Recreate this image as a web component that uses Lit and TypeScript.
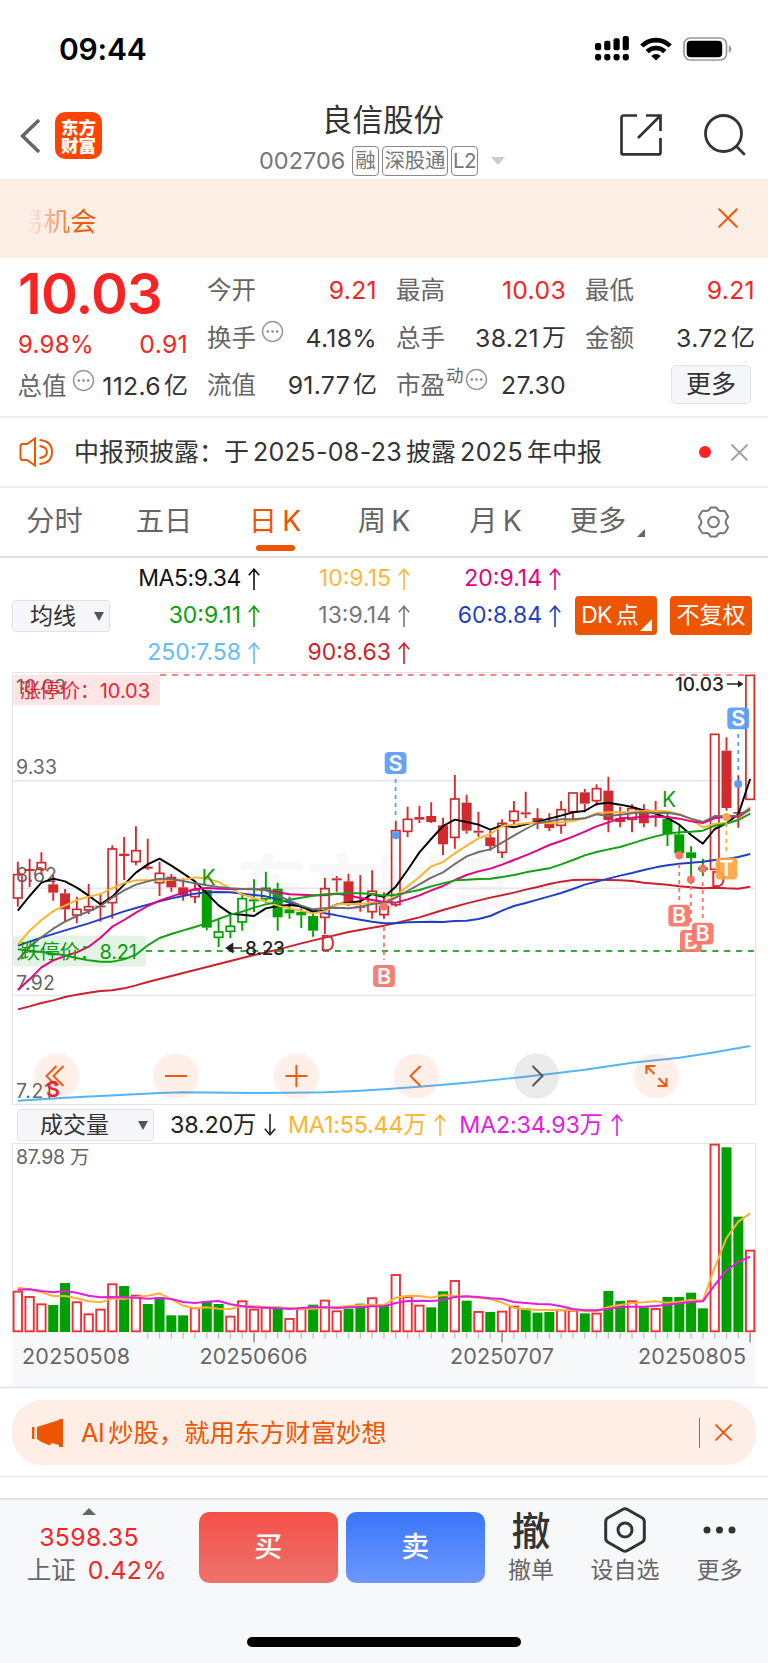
import { LitElement, html, svg, css } from "lit";
import { customElement } from "lit/decorators.js";

type Kind = "h" | "r" | "g" | "o";
type Candle = [Kind, number, number, number, number];

const X0 = 17.8;
const STEP = 11.812;
const xAt = (i: number) => X0 + STEP * i;
const priceY = (v: number) => 660 + v / 3;
const volY = (v: number) => 1100 + v / 3;

/* kind, body top, body bottom, high, low (h: hollow red, r: solid red, g: solid green, o: hollow green) */
const CANDLES: Candle[] = [
  ["h", 644, 714, 605, 740], ["r", 627, 633, 596, 681], ["h", 608, 628, 577, 645], ["r", 673, 698, 645, 722],
  ["r", 700, 748, 687, 785], ["h", 748, 765, 710, 790], ["h", 740, 750, 672, 762], ["r", 737, 742, 700, 785],
  ["h", 567, 728, 556, 776], ["r", 581, 588, 531, 660], ["h", 572, 605, 499, 616], ["r", 620, 626, 536, 630],
  ["h", 640, 668, 605, 708], ["r", 650, 682, 642, 695], ["r", 682, 706, 655, 722], ["h", 690, 710, 672, 730],
  ["g", 690, 803, 690, 811], ["o", 816, 832, 777, 861], ["o", 799, 814, 757, 835], ["o", 716, 786, 698, 812],
  ["g", 718, 724, 658, 756], ["o", 685, 716, 635, 730], ["g", 686, 772, 668, 812], ["g", 748, 760, 710, 776],
  ["g", 756, 766, 745, 804], ["g", 768, 812, 755, 830], ["h", 686, 772, 653, 822], ["r", 655, 661, 648, 695],
  ["r", 664, 730, 641, 738], ["r", 738, 743, 645, 755], ["h", 694, 755, 631, 776], ["h", 740, 764, 697, 776],
  ["h", 512, 734, 482, 740], ["h", 478, 514, 440, 531], ["r", 471, 479, 437, 489], ["r", 468, 486, 427, 489],
  ["r", 496, 553, 473, 585], ["h", 417, 532, 345, 566], ["r", 428, 512, 404, 521], ["r", 512, 518, 455, 530],
  ["r", 532, 558, 512, 572], ["h", 490, 577, 478, 594], ["h", 454, 482, 423, 495], ["r", 457, 463, 395, 474],
  ["r", 474, 488, 445, 508], ["r", 490, 504, 460, 513], ["h", 449, 496, 423, 521], ["h", 399, 455, 399, 478],
  ["r", 397, 431, 387, 457], ["h", 386, 422, 373, 437], ["r", 392, 480, 350, 517], ["r", 474, 486, 440, 502],
  ["h", 446, 478, 433, 517], ["r", 448, 490, 433, 502], ["r", 466, 472, 423, 500], ["g", 476, 523, 460, 558],
  ["g", 523, 580, 498, 598], ["g", 577, 594, 559, 672], ["g", 622, 630, 596, 648], ["h", 223, 628, 223, 628],
  ["r", 272, 444, 232, 452], ["r", 456, 461, 346, 503], ["h", 46, 418, 46, 418],
];

const MA_LINES: { color: string; pts: string }[] = [
  { color: "#54b4f7", pts: "0:1322 4:1313 7:1308 12:1299 14:1297 20:1299 23:1298.5 26:1297 29:1292 31:1288 34:1280 38:1268 42:1254 45:1242 48:1229 52:1208 56:1193 59:1177 62:1158" },
  { color: "#cc1f2d", pts: "0:1048 1:1039 2:1029 3:1021 4:1011 5:1004 6:998 7:993 8:991 9:985 10:976 11:966 12:957 14:939 16:921 18:903 20:885 22:869 24:850 26:833 28:816 30:803 31:797 32:789 34:772 36:750 38:730 40:713 42:698 43:689 44:681 45:672 46:665 47:660 48:659 49:659 50:660 51:661 52:663 53:668 54:671 55:674 56:679 57:682 58:685 59:683 60:685 61:686 62:680" },
  { color: "#1f3fc4", pts: "0:857 2:833 4:811 6:790 7:778 8:766 9:754 10:744 11:734 12:724 13:715 14:708 15:701 16:697 17:696 18:697 19:701 20:705 21:709 22:718 23:728 24:741 25:750 26:760 27:766 28:773 29:779 30:785 31:790 32:790 33:787 34:786 35:785 36:786 37:783 38:782 39:777 40:768 41:752 42:738 43:729 44:719 45:709 46:699 47:687 48:674 49:665 50:656 51:647 52:639 53:630 54:622 55:616 56:611 57:608 58:605 59:600 60:597 61:591 62:582" },
  { color: "#000000", pts: "0:752 1:708 2:668 3:656 4:664 5:683 6:707 7:733 8:710 9:674 10:638 11:613 12:596 13:617 14:640 15:664 16:700 17:736 18:761 19:764 20:768 21:745 22:738 23:735 24:739 25:756 26:752 27:733 28:728 29:724 30:702 31:711 32:680 33:630 34:577 35:537 36:498 37:479 38:486 39:494 40:509 41:496 42:502 43:493 44:485 45:476 46:467 47:457 48:453 49:432 50:428 51:434 52:441 53:451 54:461 55:474 56:494 57:525 58:551 59:507 60:490 61:463 62:357" },
  { color: "#ffb32e", pts: "0:854 1:812 2:780 3:753 4:737 5:720 6:710 7:702 8:684 9:669 10:661 11:661 12:660 13:660 14:659 15:652 16:656 17:666 18:686 19:703 20:714 21:725 22:737 23:745 24:752 25:760 26:754 27:733 28:731 29:732 30:728 31:726 32:707 33:679 34:651 35:619 36:606 37:580 38:557 39:535 40:522 41:498 42:494 43:490 44:488 45:490 46:487 47:483 48:474 49:460 50:457 51:457 52:456 53:453 54:452 55:454 56:462 57:478 58:502 59:491 60:490 61:479 62:441" },
  { color: "#e5007f", pts: "0:990 1:958 2:922 3:901 4:888 5:877 6:860 7:833 8:800 9:780 10:758 11:738 12:722 13:710 14:698 15:687 16:684 17:686 18:687 19:687 20:688 21:690 22:697 23:703 24:704 25:706 26:706 27:701 28:706 29:714 30:720 31:726 32:728 33:718 34:706 35:691 36:678 37:660 38:645 39:634 40:626 41:614 42:600 43:586 44:571 45:555 46:543 47:530 48:515 49:499 50:487 51:475 52:473 53:470 54:470 55:471 56:476 57:484 58:489 59:474 60:470 61:470 62:448" },
  { color: "#11a011", pts: "0:868 2:876 4:886 5:894 6:901 7:905 8:905 9:898 10:884 11:856 12:834 13:822 14:811 15:801 16:790 17:777 18:764 19:755 20:743 21:733 22:726 23:719 24:713 25:707 26:703 27:701 28:700 29:700 30:702 31:707 32:704 33:697 34:690 35:679 36:670 37:661 38:659 39:657 40:656 41:651 42:645 43:637 45:625 46:613 47:600 48:586 49:576 50:568 51:561 52:550 53:539 54:529 55:521 56:517 57:515 58:512 59:497 60:491 61:480 62:461" },
  { color: "#6e6e6e", pts: "0:900 1:860 2:832 3:806 4:785 5:768 6:754 7:738 8:713 9:691 10:674 11:664 12:656 13:658 14:663 15:670 16:676 17:681 18:685 19:687 20:686 21:691 22:706 23:722 24:737 25:748 26:745 27:743 28:745 29:741 30:732 31:729 32:713 33:693 34:673 35:653 36:637 37:612 38:589 39:576 40:568 41:548 42:527 43:507 44:489 45:484 46:478 47:478 48:475 49:463 50:468 51:464 52:460 53:457 54:459 55:458 56:464 57:476 58:486 59:468 60:469 61:467 62:446" },
];

const VOLUMES =
  "r574 r590 r612 g615 g549 r606 r642 r628 r552 g558 r586 g612 g592 g646 g646 r624 g606 g612 r649 r603 r628 r622 g620 r656 r627 g614 r601 r633 g626 g611 r594 g617 r524 r590 r616 g622 g574 r542 g602 r635 g636 r634 r619 g625 g638 g636 r630 r631 g640 r640 g573 g603 r603 g622 r626 g591 g591 g578 g625 r133 g142 g350 r451".split(" ");

const VOL_LINES = [
  { color: "#ffb32e", ys: [563, 568, 577, 588, 588, 595, 604, 607, 595, 597, 591, 587, 580, 598, 617, 625, 622, 626, 627, 618, 619, 621, 623, 624, 628, 626, 623, 621, 618, 616, 614, 615, 593, 587, 588, 593, 585, 588, 590, 593, 597, 608, 623, 628, 630, 630, 630, 629, 633, 634, 621, 615, 609, 607, 604, 608, 606, 600, 602, 502, 414, 365, 340] },
  { color: "#e31ce3", ys: [569, 568, 573, 577, 573, 578, 587, 592, 591, 592, 593, 596, 594, 597, 606, 609, 605, 603, 613, 619, 622, 623, 625, 627, 624, 622, 622, 624, 622, 622, 619, 619, 609, 603, 602, 603, 600, 591, 589, 591, 595, 597, 606, 609, 612, 613, 619, 627, 631, 631, 626, 622, 620, 620, 618, 614, 610, 606, 604, 555, 511, 486, 470] },
];

const RED = "#d02b2f";
const GREEN = "#00a000";

const cross = (size: number, color: string, width = 2) => html`<svg width=${size} height=${size} viewBox="0 0 20 20"
  fill="none" stroke=${color} stroke-width=${(width * 20) / size} stroke-linecap="round"><path d="M1.2 1.2 18.8 18.8M18.8 1.2 1.2 18.8"/></svg>`;

const info = html`<svg class="info" width="23" height="23" viewBox="0 0 23 23"><circle cx="11.5" cy="11.5" r="10" fill="none"
  stroke="#999" stroke-width="1.5"/><g fill="#888"><circle cx="6.8" cy="11.5" r="1.3"/><circle cx="11.5" cy="11.5" r="1.3"/><circle cx="16.2" cy="11.5" r="1.3"/></g></svg>`;

const arrow = (dir: "up" | "down" = "up") => html`<svg width="12" height="22" viewBox="0 0 12 22" fill="none" stroke="currentColor"
  stroke-width="1.6"><path d=${dir === "up" ? "M6 22V1.5M.8 7.2 6 1.2l5.2 6" : "M6 0v20.5M.8 14.8 6 20.8l5.2-6"}/></svg>`;

const caret = html`<svg width="10" height="9" viewBox="0 0 10 9"><path d="M0 0h10L5 9z" fill="#555"/></svg>`;

@customElement("kline-chart")
export class KlineChart extends LitElement {
  static styles = css`
    :host { display: block; }
    svg { display: block; }
    text { font-family: Inter, "Noto Sans CJK SC", sans-serif; }
  `;

  private candle([kind, top, bottom, high, low]: Candle, i: number) {
    const x = xAt(i);
    const color = kind === "g" || kind === "o" ? GREEN : RED;
    const hollow = kind === "h" || kind === "o";
    const [t, b, h, l] = [top, bottom, high, low].map(priceY);
    return svg`<path d="M${x} ${h}V${t}M${x} ${b}V${l}" stroke=${color} stroke-width="1.9"/>
      ${hollow
        ? svg`<rect x=${x - 4.2} y=${t} width="8.4" height=${b - t} fill="none" stroke=${color} stroke-width="1.7"/>`
        : svg`<rect x=${x - 5} y=${t} width="10" height=${b - t} fill=${color}/>`}`;
  }

  private line({ color, pts }: { color: string; pts: string }) {
    const points = pts.split(" ").map((p) => {
      const [i, v] = p.split(":").map(Number);
      return `${xAt(i)},${priceY(v)}`;
    });
    return svg`<polyline points=${points.join(" ")} fill="none" stroke=${color} stroke-width="1.95" stroke-linejoin="round"/>`;
  }

  private marker(letter: string, color: string, x: number, y: number, dotY: number, from: number, to: number) {
    return svg`<path d="M${x} ${from}V${to}" stroke=${color} stroke-width="1.8" stroke-dasharray="4 4"/>
      <circle cx=${x} cy=${dotY} r="4" fill=${color}/>
      <rect x=${x - 10.9} y=${y - 10.9} width="21.8" height="21.8" rx="4" fill=${color} fill-opacity=".92"/>
      <text x=${x} y=${y + 7.8} text-anchor="middle" font-size="21.5" font-weight="600" fill="#fff">${letter}</text>`;
  }

  private tool(x: number, path: string, muted = false) {
    return svg`<circle cx=${x} cy="1076" r="22.6" fill=${muted ? "#888" : "#f47a30"} fill-opacity=${muted ? ".18" : ".11"}/>
      <path transform="translate(${x} 1076)" d=${path} fill="none" stroke=${muted ? "#555" : "#f05a0a"} stroke-width="2"/>`;
  }

  render() {
    const blue = "#5a9cf8";
    const coral = "#fb7365";
    return html`<svg width="768" height="440" viewBox="0 668 768 440">
      <g font-size="71" font-weight="700" fill="#f8f8f9"><text x="236" y="913" textLength="282">东方财富</text></g>
      <path d="M12.5 672.5H755.5V1104.5H12.5Z" fill="none" stroke="#e3e4e8"/>
      <path d="M13 780.7H755M13 888.3H755M13 995.4H755" stroke="#e4e7ee" stroke-width="1.4"/>
      <rect x="13" y="674.5" width="147" height="31" rx="3" fill="#fee6e7"/>
      <rect x="13" y="935.5" width="133" height="31" rx="3" fill="#e4f4e4"/>
      <g font-size="19.5" fill="#666">
        <text x="16" y="694" textLength="50">10.03</text><text x="16" y="774" textLength="41">9.33</text>
        <text x="16" y="882" textLength="41">8.62</text><text x="16" y="990" textLength="39">7.92</text>
        <text x="16" y="1098" textLength="36">7.21</text>
      </g>
      <path d="M160 675H750" stroke="#ff8080" stroke-width="1.8" stroke-dasharray="6 5.8"/>
      <path d="M146 951H756" stroke="#2fae2f" stroke-width="2" stroke-dasharray="6 5.8"/>
      ${CANDLES.map((c, i) => this.candle(c, i))}
      ${MA_LINES.map((l) => this.line(l))}
      <text x="20" y="698" font-size="20" fill="#f5222d" textLength="130">涨停价：10.03</text>
      <text x="20" y="959" font-size="20" fill="#0a9a0a" textLength="117">跌停价：8.21</text>
      <g font-size="19" fill="#222" font-weight="500">
        <text x="245" y="955" textLength="40">8.23</text><text x="675" y="691" textLength="49">10.03</text>
      </g>
      <path d="M242 948H228M232.5 944 226.5 948l6 4zM727 684h14" stroke="#222" stroke-width="1.6" fill="#222"/>
      <path d="M738 680.5 743.5 684l-5.5 3.5z" fill="#222"/>
      <g font-size="21"><text x="201.5" y="885" fill="#0a9a0a">K</text><text x="662" y="806.5" fill="#0a9a0a">K</text>
        <text x="320" y="950.5" fill=${RED}>D</text><text x="710.5" y="887" fill=${RED}>D</text></g>
      ${this.marker("S", blue, 395.6, 763, 835.3, 779, 816)}
      ${this.marker("B", coral, 384, 976, 906.5, 927, 960)}
      ${this.marker("S", blue, 738.2, 718.4, 784, 734, 770)}
      ${this.marker("T", "#ffa63d", 726.4, 868.5, 817, 823, 854)}
      ${this.marker("B", coral, 679.2, 915.6, 855.3, 864, 900)}
      ${this.marker("B", coral, 690.9, 941, 879.5, 886, 926)}
      ${this.marker("B", coral, 702.7, 933.6, 868.8, 882, 919)}
      ${this.tool(56.5, "M0-10-10 0 0 10M7-10-3 0 7 10")}
      ${this.tool(176, "M-11 0H11")}
      ${this.tool(296.4, "M-11 0H11M0-11V11")}
      ${this.tool(416.5, "M4-10-6 0 4 10")}
      ${this.tool(536.5, "M-4-10 6 0-4 10", true)}
      ${this.tool(656.4, "M-10-2V-10H-1M-10-10-2-2M10 2V10H1M10 10 2 2")}
      <text x="46" y="1096.5" font-size="21.5" font-weight="600" fill="#f5222d">S</text>
    </svg>`;
  }
}

@customElement("volume-chart")
export class VolumeChart extends LitElement {
  static styles = css`
    :host { display: block; }
    svg { display: block; }
    text { font-family: Inter, "Noto Sans CJK SC", sans-serif; }
  `;

  render() {
    const base = volY(696);
    const ticks = Array.from({ length: 52 }, (_, k) => k + 11);
    return html`<svg width="768" height="247" viewBox="0 1142 768 247">
      <rect x="12" y="1332" width="744" height="55" fill="#f7f8fa"/>
      <path d="M12.5 1332V1143.5H755.5V1332" fill="none" stroke="#e3e4e8"/>
      <path d="M0 1387.5H768" stroke="#e1e3e8" stroke-width="1.4"/>
      <text x="16" y="1163.5" font-size="19.5" fill="#666" textLength="73.5">87.98 万</text>
      ${VOLUMES.map((v, i) => {
        const x = xAt(i);
        const top = volY(Number(v.slice(1)));
        return v[0] === "g"
          ? svg`<rect x=${x - 5} y=${top} width="10" height=${base - top} fill=${GREEN}/>`
          : svg`<rect x=${x - 4.2} y=${top + 0.3} width="8.4" height=${base - top - 1} fill="#fff" stroke="#f03035" stroke-width="1.9"/>`;
      })}
      ${VOL_LINES.map(({ color, ys }) => svg`<polyline points=${ys.map((v, i) => `${xAt(i)},${volY(v)}`).join(" ")}
        fill="none" stroke=${color} stroke-width="2" stroke-linejoin="round"/>`)}
      ${ticks.map((i) => (i === 20 || i === 41 || i === 62)
        ? svg`<path d="M${xAt(i)} 1332.5V1342.5" stroke="#999" stroke-width="1.7"/>`
        : svg`<path d="M${xAt(i)} 1332.5V1338.5" stroke="#bbb" stroke-width="1.2"/>`)}
      <g font-size="21.5" fill="#666">
        <text x="22" y="1364" textLength="108">20250508</text><text x="199.5" y="1364" textLength="108">20250606</text>
        <text x="450" y="1364" textLength="104">20250707</text><text x="638" y="1364" textLength="108">20250805</text>
      </g>
    </svg>`;
  }
}

@customElement("app-root")
export class AppRoot extends LitElement {
  static styles = css`
    :host {
      display: block; width: 768px; height: 1663px; overflow: hidden; background: #fff; color: #333;
      font-family: Inter, "Noto Sans CJK SC", sans-serif; font-size: 24px; line-height: 1; box-sizing: border-box;
    }
    * { box-sizing: border-box; }
    svg { display: block; flex: none; }
    .status { height: 92px; display: flex; align-items: center; padding: 5px 36px 0 59px; color: #000; }
    .clock { font-size: 30px; font-weight: 600; letter-spacing: -0.2px; flex: 1; }
    .status-icons { display: flex; gap: 11px; align-items: center; }
    .nav { height: 87px; display: grid; grid-template-columns: 240px 1fr 240px; }
    .nav-left { display: flex; gap: 15px; padding: 20px 0 0 20px; align-items: flex-start; }
    .back { margin-top: 7px; }
    .logo { width: 47px; height: 47px; border-radius: 10px; background: #ff4400; color: #fff; display: grid; place-content: center;
      text-align: center; font: 900 17.5px/18px "Noto Sans CJK SC", sans-serif; }
    .nav-mid { display: flex; flex-direction: column; align-items: center; }
    .name { font-size: 30.6px; line-height: 32px; margin: 12px 0 0 -2px; }
    .codes { display: flex; align-items: center; color: #777; margin: 10px 0 0 -4px; gap: 3px; white-space: nowrap; height: 30px; }
    .code { letter-spacing: 0; margin-right: 4px; font-size: 23.5px; }
    .tag { border: 1.5px solid #888; border-radius: 4px; height: 30px; padding: 0 2px; line-height: 27px; font-size: 20.5px; letter-spacing: -0.3px; }
    .tag.lv { padding: 0 1px; letter-spacing: -0.6px; }
    .codes svg { margin-left: 10px; }
    .nav-right { display: flex; justify-content: flex-end; gap: 42px; padding: 22px 22px 0 0; }
    .promo { border-top: 2px solid #ececee; height: 79px; background: #fdeee6; display: flex; align-items: center; justify-content: space-between; padding: 0 30px 2px 17px; }
    .promo-text { font-size: 26.5px; color: #f05a0a; height: 40px; line-height: 40px; padding-top: 2px;
      -webkit-mask-image: linear-gradient(90deg, transparent 12px, #000 62px); mask-image: linear-gradient(90deg, transparent 12px, #000 62px); }
    .promo svg { margin-bottom: 2px; }
    .quote { height: 160px; border-bottom: 2px solid #eceef0; display: grid; grid-template-columns: 170px repeat(3, 169.5px); column-gap: 19.5px; padding: 0 12px 0 18px; }
    .col { display: flex; flex-direction: column; padding-top: 9px; }
    .col.main { padding-top: 0; }
    .cell { height: 47.3px; display: flex; align-items: center; white-space: nowrap; letter-spacing: 0.3px; }
    .main .cell { height: 45px; }
    .main .cell + .cell { height: 38px; }
    .k { color: #666; font-size: 24.5px; letter-spacing: 0; margin-left: -0.5px; }
    .v { margin-left: auto; font-size: 24.8px; display: flex; gap: 3px; }
    .v .unit { font-size: 24px; letter-spacing: 0; }
    .red, .cell .red { color: #f82424; }
    .price { font-size: 56px; font-weight: 600; color: #f82424; letter-spacing: -0.8px; height: 64px; line-height: 72px; }
    .info { margin: -12px 0 0 5px; }
    .main .info { margin-right: -3px; }
    .sup { font-size: 17.5px; color: #666; margin: -18px -4px 0 1px; }
    .more { width: 80px; height: 39px; border: 1.5px solid #e0e2e8; border-radius: 5px; background: #f6f7fa; margin: -1px 4px 0 auto;
      display: grid; place-content: center; font-size: 25px; letter-spacing: 0; }
    .notice { height: 70px; border-bottom: 2px solid #eceef0; display: flex; align-items: center; padding: 0 20px 0 19px; }
    .notice-text { margin-left: 20px; flex: 1; font-size: 25px; white-space: nowrap; }
    .num { margin: 0 4px; letter-spacing: 0.35px; }
    .dot { width: 12px; height: 12px; border-radius: 50%; background: #f82424; margin-right: 20px; }
    .tabs { height: 70px; border-bottom: 2px solid #dfe2e7; display: grid; grid-template-columns: 109px 110px 112px 106px 117px 88px 1fr; font-size: 28.3px; color: #666; }
    .tab { display: flex; justify-content: center; align-items: center; gap: 5px; position: relative; padding-bottom: 1px; }
    .tab:last-child { padding-left: 16px; }
    .tab.on { color: #ee5500; }
    .tab.on::after { content: ""; position: absolute; bottom: 5px; width: 39px; height: 6px; border-radius: 3px; background: #ee5500; }
    .tri { position: absolute; right: -3px; bottom: 19px; }
    .ma { height: 110px; display: grid; grid-template-columns: 110px 465px 1fr; padding: 2px 0 0; }
    .side { display: flex; align-items: center; padding: 1px 0 0 12px; }
    .select { height: 32px; border: 1.5px solid #e0e2e8; border-radius: 4px; background: #f6f7fa; display: flex; align-items: center; justify-content: space-between; }
    .select.avg { width: 98px; padding: 0 5px 0 17px; font-size: 23px; }
    .select.vol { width: 137px; padding: 0 5px 0 22px; font-size: 23px; letter-spacing: 0; }
    .values { display: grid; grid-template-columns: 149.5px 150px 151px; grid-template-rows: repeat(3, 37px); font-size: 23px; letter-spacing: 0; }
    .value { display: flex; align-items: center; justify-content: flex-end; gap: 6.5px; }
    .value:first-child { letter-spacing: -0.4px; }
    .chips { display: flex; gap: 13px; align-items: center; padding: 0 0 1px; }
    .chip { position: relative; width: 82px; height: 39px; background: #ee5500; color: #fff; border-radius: 4px; display: flex; align-items: center; justify-content: center; gap: 4px; font-size: 23px; }
    .chip.dk { padding-right: 13px; letter-spacing: -0.8px; }
    .chip svg { position: absolute; right: 5px; bottom: 4px; }
    .vol-head { height: 34px; display: flex; align-items: center; padding-left: 17px; white-space: nowrap; letter-spacing: -0.2px; font-size: 23.3px; }
    .stat { display: flex; align-items: center; gap: 8px; }
    .s1 { margin-left: 16px; color: #222; }
    .s2 { margin-left: 12px; color: #ffb32e; }
    .s3 { margin-left: 13px; color: #e31ce3; }
    .ai { height: 65px; margin: 11px 12px 11px; border-radius: 30px; background: #feeee6; color: #ee5500; display: flex; align-items: center; padding: 0 24px 0 20px; }
    .ai-text { margin-left: 18px; flex: 1; font-size: 25.3px; white-space: nowrap; }
    .ai-text .latin { margin-right: 4px; letter-spacing: -0.5px; }
    .ai-rule { width: 1.5px; height: 30px; background: #ee5500; margin-right: 15px; }
    .strip { height: 22px; border-top: 1.5px solid #e4e5ea; }
    .bottom { height: 166px; border-top: 2px solid #e0e2e6; background: #f7f8fa; display: flex; flex-direction: column; align-items: center; justify-content: space-between; padding-bottom: 17px; }
    .actions { width: 100%; display: flex; padding-top: 8px; height: 100px; }
    .index { width: 199px; padding-right: 21px; display: flex; flex-direction: column; align-items: center; font-size: 24.8px; letter-spacing: 0.3px; }
    .index-val { margin-top: 10px; }
    .index-row { display: flex; gap: 12px; margin: 8px 0 0 16px; align-items: center; }
    .trade { width: 138.5px; height: 71px; margin: 3.5px 8.5px 0 0; border-radius: 10px; display: grid; place-content: center; color: #fff; font-weight: 500; font-size: 28px; }
    .buy { background: linear-gradient(#f5504a, #ec726c); }
    .sell { background: linear-gradient(#3a76fa, #6c98fd); }
    .act { display: flex; flex-direction: column; align-items: center; color: #666; font-size: 23px; }
    .act.a { width: 76px; } .act.b { width: 112px; } .act.c { width: 77px; }
    .glyph { height: 44px; display: grid; place-content: center; color: #333; font-size: 39px; font-weight: 500; margin-bottom: 7px; }
    .home { width: 274px; height: 10px; border-radius: 5px; background: #000; }
  `;

  private ma(text: string, color: string) {
    return html`<span class="value" style="color:${color}">${text}${arrow()}</span>`;
  }

  private cell(key: string, value: string, unit = "", red = false, extra: unknown = "") {
    return html`<div class="cell"><span class="k">${key}</span>${extra}<span class="v ${red ? "red" : ""}"><span>${value}</span>${
      unit ? html`<span class="unit">${unit}</span>` : ""}</span></div>`;
  }

  render() {
    return html`
      <header class="status">
        <span class="clock">09:44</span>
        <div class="status-icons">
          <svg width="34" height="25" viewBox="0 0 34 25">
            <rect x="0" y="7" width="6.2" height="7.2" rx="2"/><rect x="9.2" y="4.7" width="6.2" height="9.500" rx="2"/>
            <rect x="18.5" y="2.300" width="6.2" height="11.900" rx="2"/><rect x="27.700" y="0" width="6.200" height="14.200" rx="2"/>
            <rect x="0" y="18" width="6.2" height="6.400" rx="2.400"/><rect x="9.2" y="18" width="6.2" height="6.400" rx="2.400"/>
            <rect x="18.5" y="18" width="6.2" height="6.400" rx="2.400"/><rect x="27.700" y="18" width="6.2" height="6.400" rx="2.400"/>
          </svg>
          <svg width="32" height="24" viewBox="0 0 32 24" fill="none" stroke="#000" stroke-width="4.6">
            <path d="M1.8 9a20 20 0 0 1 28.400 0M7.200 14.600a12.400 12.400 0 0 1 17.600 0"/><path d="M16 23.600 11.300 18.900a6.800 6.800 0 0 1 9.400 0z" fill="#000" stroke="none"/>
          </svg>
          <svg width="49" height="24" viewBox="0 0 49 24"><rect x="1" y="1" width="42.5" height="22" rx="6.5" fill="none" stroke="#999" stroke-width="1.7"/>
            <rect x="3.7" y="3.8" width="35.500" height="16.4" rx="4" fill="#000"/><path d="M45.8 8.2c3.400 1.200 3.400 6.400 0 7.600z" fill="#999"/></svg>
        </div>
      </header>
      <nav class="nav">
        <div class="nav-left">
          <svg class="back" width="20" height="34" viewBox="0 0 20 34" fill="none" stroke="#666" stroke-width="3.4"><path d="M19 1 2.500 17 19 33"/></svg>
          <div class="logo"><span>东方</span><span>财富</span></div>
        </div>
        <div class="nav-mid">
          <div class="name">良信股份</div>
          <div class="codes"><span class="code">002706</span><span class="tag">融</span><span class="tag">深股通</span><span class="tag lv">L2</span>
            <svg width="14" height="8" viewBox="0 0 14 8"><path d="M0 0h14L7 8z" fill="#ccc"/></svg></div>
        </div>
        <div class="nav-right">
          <svg width="42" height="42" viewBox="0 0 42 42" fill="none" stroke="#333" stroke-width="2.7">
            <path d="M17 1.500H3.500a2 2 0 0 0-2 2V38.400a2 2 0 0 0 2 2h35a2 2 0 0 0 2-2V24M26 1.500H40.500V17M40 2 18 24"/></svg>
          <svg width="42" height="42" viewBox="0 0 42 42" fill="none" stroke="#333" stroke-width="2.8" stroke-linecap="round"><circle cx="19.5" cy="19.5" r="18"/><path d="M32.500 32.500 40 40"/></svg>
        </div>
      </nav>
      <section class="promo"><div class="promo-text">易机会</div>${cross(20, "#f05a0a")}</section>
      <section class="quote">
        <div class="col main">
          <div class="price">10.03</div>
          <div class="cell red"><span>9.98%</span><span class="v">0.91</span></div>
          ${this.cell("总值", "112.6", "亿", false, info)}
        </div>
        <div class="col">
          ${this.cell("今开", "9.21", "", true)}${this.cell("换手", "4.18%", "", false, info)}
          ${this.cell("流值", "91.77", "亿")}
        </div>
        <div class="col">
          ${this.cell("最高", "10.03", "", true)}${this.cell("总手", "38.21", "万")}
          ${this.cell("市盈", "27.30", "", false, html`<span class="sup">动</span>${info}`)}
        </div>
        <div class="col">
          ${this.cell("最低", "9.21", "", true)}${this.cell("金额", "3.72", "亿")}
          <div class="cell"><span class="more">更多</span></div>
        </div>
      </section>
      <section class="notice">
        <svg width="35" height="30" viewBox="0 0 35 30" fill="none" stroke="#ee5500" stroke-width="2"><path d="M3.500 7H8L16 1.500V28.500L8 23H3.500Q1.500 23 1.500 21V9Q1.500 7 3.500 7ZM20.500 9q7.500 1 7.500 6t-7.500 6M20.500 3q12.500 1 12.500 12t-12.500 12"/></svg>
        <div class="notice-text">中报预披露：于<span class="num">2025-08-23</span>披露<span class="num">2025</span>年中报</div>
        <span class="dot"></span>${cross(17, "#999", 1.8)}
      </section>
      <nav class="tabs">
        <span class="tab">分时</span><span class="tab">五日</span><span class="tab on"><span>日</span><span>K</span></span>
        <span class="tab"><span>周</span><span>K</span></span><span class="tab"><span>月</span><span>K</span></span>
        <span class="tab">更多<svg class="tri" width="8" height="8" viewBox="0 0 8 8"><path d="M8 0V8H0z" fill="#666"/></svg></span>
        <span class="tab"><svg width="33" height="32" viewBox="0 0 33 32" fill="none" stroke="#777" stroke-width="2" stroke-linejoin="round">
          <path d="M13.500 1.500h6q1.200 3.800 5 3.500 3-.6 3.800.7l2.500 4.300q.6 1.300-1 2.800-2.300 3.200 0 6.400 1.600 1.500 1 2.800l-2.500 4.300q-.8 1.300-3.800.7-3.800-.3-5 3.500h-6q-1.200-3.800-5-3.500-3 .6-3.800-.7L2.200 22q-.6-1.300 1-2.800 2.300-3.200 0-6.400-1.600-1.500-1-2.800l2.500-4.300q.8-1.300 3.800-.7 3.800.3 5-3.500Z"/><circle cx="16.5" cy="16" r="5.3"/></svg></span>
      </nav>
      <section class="ma">
        <div class="side"><span class="select avg">均线${caret}</span></div>
        <div class="values">
          ${this.ma("MA5:9.34", "#111")}${this.ma("10:9.15", "#ffb83a")}${this.ma("20:9.14", "#e5007f")}
          ${this.ma("30:9.11", "#0ba00b")}${this.ma("13:9.14", "#777")}${this.ma("60:8.84", "#1f3fc4")}
          ${this.ma("250:7.58", "#62bcfb")}${this.ma("90:8.63", "#cc1f2d")}
        </div>
        <div class="chips">
          <span class="chip dk"><span>DK</span><span>点</span><svg width="12" height="12" viewBox="0 0 12 12"><path d="M12 0V12H0z" fill="#fff"/></svg></span>
          <span class="chip">不复权</span>
        </div>
      </section>
      <kline-chart></kline-chart>
      <section class="vol-head">
        <span class="select vol">成交量${caret}</span>
        <span class="stat s1">38.20万${arrow("down")}</span>
        <span class="stat s2">MA1:55.44万${arrow()}</span>
        <span class="stat s3">MA2:34.93万${arrow()}</span>
      </section>
      <volume-chart></volume-chart>
      <section class="ai">
        <svg width="31" height="28" viewBox="0 0 31 28" fill="#ee5500"><path d="M0 8h2.500v12H0zM5 8 27 1V0h4v28h-4v-2l-7-2q-2 3-4.500 1.500L9.500 23 5 20z"/></svg>
        <div class="ai-text"><span class="latin">AI</span>炒股，就用东方财富妙想</div>
        <span class="ai-rule"></span>${cross(17, "#ee5500", 1.8)}
      </section>
      <div class="strip"></div>
      <footer class="bottom">
        <div class="actions">
          <div class="index">
            <svg width="14" height="7" viewBox="0 0 14 7"><path d="M0 7h14L7 0z" fill="#666"/></svg>
            <span class="index-val red">3598.35</span>
            <div class="index-row"><span class="k">上证</span><span class="red">0.42%</span></div>
          </div>
          <div class="trade buy">买</div>
          <div class="trade sell">卖</div>
          <div class="act a"><span class="glyph">撤</span><span>撤单</span></div>
          <div class="act b"><span class="glyph"><svg width="42" height="46" viewBox="0 0 42 46" fill="none" stroke="#333" stroke-width="3">
            <path d="M19 2.200q2-1.100 4 0L38 10.800q2.300 1.300 2.300 4V31.200q0 2.700-2.300 4L23 43.800q-2 1.100-4 0L4 35.200q-2.300-1.300-2.300-4V14.800q0-2.700 2.300-4Z"/><circle cx="21" cy="23" r="7"/></svg></span><span>设自选</span></div>
          <div class="act c"><span class="glyph"><svg width="33" height="8" viewBox="0 0 33 8" fill="#333"><circle cx="4" cy="4" r="3.5"/><circle cx="16.5" cy="4" r="3.5"/><circle cx="29" cy="4" r="3.5"/></svg></span><span>更多</span></div>
        </div>
        <div class="home"></div>
      </footer>
    `;
  }
}
